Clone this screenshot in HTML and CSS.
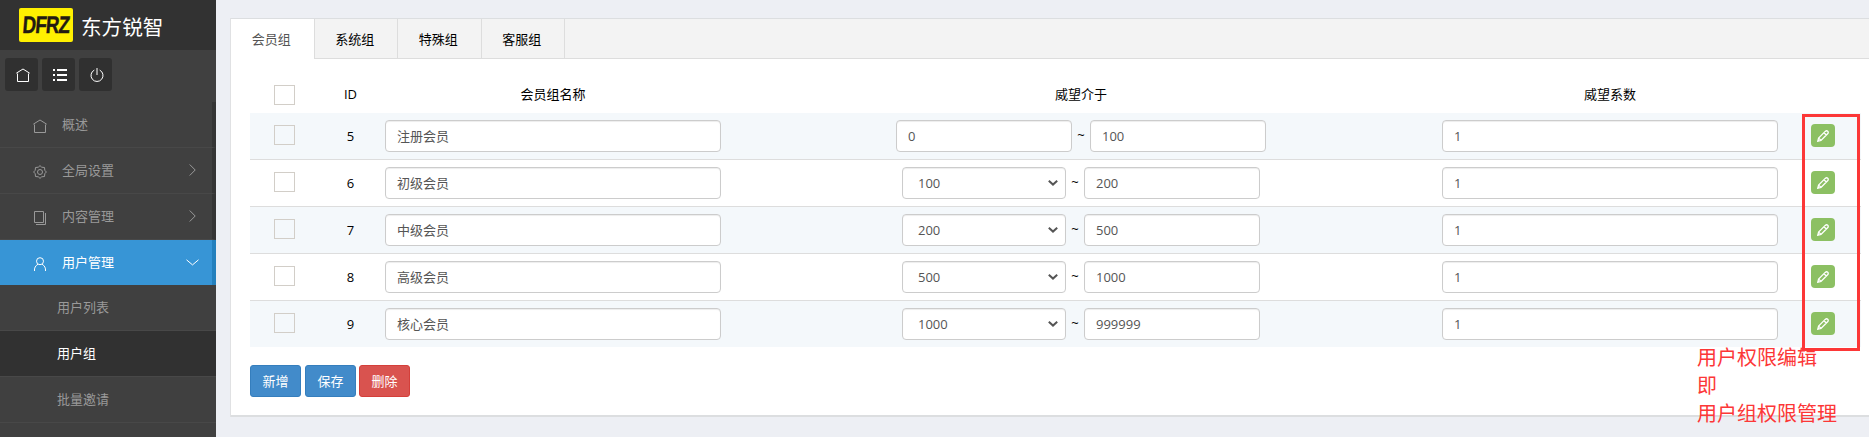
FILE: index.html
```html
<!DOCTYPE html>
<html lang="zh-CN">
<head>
<meta charset="utf-8">
<title>用户组</title>
<link rel="stylesheet" href="styles.css">
</head>
<body>
<svg class="defs" width="0" height="0">
  <symbol id="home" viewBox="0 0 14 14"><path d="M.3 5.200 7 1l6.700 4.200M1.500 5.500v8h11v-8" /></symbol>
  <symbol id="pencil" viewBox="0 0 12 12"><path d="M.8 11.200 1.600 8 8.200 1.400Q9.600.2 10.700 1.300T10.600 3.800L4 10.400ZM7 2.700 9.300 5M1.700 8.100 3.900 10.300"/></symbol>
  <symbol id="right" viewBox="0 0 7 12"><path d="M.7.5 6.200 6 .7 11.500"/></symbol>
</svg>
<div class="app">
  <aside class="sidebar">
    <header class="brand"><span class="logo"><b>DFRZ</b></span><span class="brand-name">东方锐智</span></header>
    <div class="tools">
      <a class="tool"><svg width="14" height="14"><use href="#home"/></svg></a>
      <a class="tool"><svg class="solid" width="14" height="12" viewBox="0 0 14 12"><path d="M0 0h2v2H0zM4 0h10v2H4zM0 5h2v2H0zM4 5h10v2H4zM0 10h2v2H0zM4 10h10v2H4z"/></svg></a>
      <a class="tool power"><svg width="14" height="14" viewBox="0 0 14 14"><path d="M4.300 2.100a6 6 0 1 0 5.400 0M7 0v7"/></svg></a>
    </div>
    <nav class="menu">
      <a class="item"><svg class="ico" width="14" height="14"><use href="#home"/></svg><span>概述</span></a>
      <a class="item"><svg class="ico" width="14" height="14" viewBox="0 0 14 14"><circle cx="7" cy="7" r="2.500"/><path d="M7 .6 8.700 2.200 11.500 2.500 11.800 5.300 13.400 7 11.800 8.700 11.500 11.500 8.700 11.800 7 13.400 5.300 11.800 2.500 11.500 2.200 8.700.6 7 2.200 5.300 2.500 2.500 5.300 2.200Z"/></svg><span>全局设置</span><svg class="arrow" width="7" height="12"><use href="#right"/></svg></a>
      <a class="item"><svg class="ico" width="14" height="14" viewBox="0 0 14 14"><path d="M1.500.5h9v11h-9zM12.500 2v11.500H3"/></svg><span>内容管理</span><svg class="arrow" width="7" height="12"><use href="#right"/></svg></a>
      <a class="item active"><svg class="ico" width="14" height="14" viewBox="0 0 14 14"><circle cx="7" cy="4.200" r="3.500"/><path d="M1.500 14Q1 9.500 5 7.200M12.500 14Q13 9.500 9 7.200"/></svg><span>用户管理</span><svg class="arrow down" width="13" height="7" viewBox="0 0 13 7"><path d="M.5.8 6.500 5.900 12.500.8"/></svg></a>
      <a class="sub">用户列表</a>
      <a class="sub current">用户组</a>
      <a class="sub">批量邀请</a>
    </nav>
  </aside>
  <main class="main">
    <section class="card">
      <ul class="tabs"><li class="tab on">会员组</li><li class="tab">系统组</li><li class="tab">特殊组</li><li class="tab">客服组</li></ul>
      <div class="body">
        <div class="row head"><i class="check"></i><span>ID</span><span>会员组名称</span><span>威望介于</span><span>威望系数</span></div>
        <div class="row odd"><i class="check"></i><span>5</span><div class="field">注册会员</div><div class="range"><div class="field">0</div><em>~</em><div class="field">100</div></div><div class="field">1</div><a class="edit"><svg width="12" height="12"><use href="#pencil"/></svg></a></div>
        <div class="row"><i class="check"></i><span>6</span><div class="field">初级会员</div><div class="range"><div class="field select">100<svg width="10" height="6" viewBox="0 0 10 6"><path d="M.8.8 5 4.600 9.200.8"/></svg></div><em>~</em><div class="field">200</div></div><div class="field">1</div><a class="edit"><svg width="12" height="12"><use href="#pencil"/></svg></a></div>
        <div class="row odd"><i class="check"></i><span>7</span><div class="field">中级会员</div><div class="range"><div class="field select">200<svg width="10" height="6" viewBox="0 0 10 6"><path d="M.8.8 5 4.600 9.200.8"/></svg></div><em>~</em><div class="field">500</div></div><div class="field">1</div><a class="edit"><svg width="12" height="12"><use href="#pencil"/></svg></a></div>
        <div class="row"><i class="check"></i><span>8</span><div class="field">高级会员</div><div class="range"><div class="field select">500<svg width="10" height="6" viewBox="0 0 10 6"><path d="M.8.8 5 4.600 9.200.8"/></svg></div><em>~</em><div class="field">1000</div></div><div class="field">1</div><a class="edit"><svg width="12" height="12"><use href="#pencil"/></svg></a></div>
        <div class="row odd last"><i class="check"></i><span>9</span><div class="field">核心会员</div><div class="range"><div class="field select">1000<svg width="10" height="6" viewBox="0 0 10 6"><path d="M.8.8 5 4.600 9.200.8"/></svg></div><em>~</em><div class="field">999999</div></div><div class="field">1</div><a class="edit"><svg width="12" height="12"><use href="#pencil"/></svg></a></div>
        <div class="actions"><a class="btn">新增</a><a class="btn">保存</a><a class="btn danger">删除</a></div>
      </div>
    </section>
  </main>
</div>
<div class="mark"></div>
<div class="note">用户权限编辑<br>即<br>用户组权限管理</div>
</body>
</html>
```
FILE: styles.css
```css
* { box-sizing: border-box; }
body { margin: 0; height: 437px; overflow: hidden; background: #edeff4; color: #000; font: 13px/20px "Open Sans", "Noto Sans CJK SC", sans-serif; }
svg { fill: none; stroke: currentColor; display: block; }
.defs { position: absolute; }
.app { display: flex; height: 437px; }

/* Sidebar */
.sidebar { width: 216px; flex: none; background: #404040; color: #999; }
.brand { height: 50px; background: #323232; display: flex; padding: 8px 0 0 19px; }
.logo { width: 54px; height: 34px; background: #fff000; border-radius: 2px; color: #231a12; display: flex; align-items: center; justify-content: center; }
.logo b { font: bold 24px/34px "Liberation Sans", sans-serif; letter-spacing: -1px; transform: scaleX(.78) skewX(-6deg); -webkit-text-stroke: .4px currentColor; }
.brand-name { margin-left: 8px; color: #fff; font-size: 20.600px; line-height: 38px; }
.tools { height: 52px; display: flex; gap: 4px; padding: 8px 5px; color: #fff; }
.tool { width: 33px; height: 33px; border-radius: 3px; background: #303030; display: flex; align-items: center; justify-content: center; padding-left: 3px; }
.power { padding-left: 2px; }
.solid { fill: currentColor; stroke: none; }
.item { height: 46px; display: flex; align-items: center; padding: 0 16px 1px 33px; border-bottom: 1px solid #484848; border-right: 4px solid #353535; }
.ico { margin: 4px 15px 0 0; }
.arrow { margin-left: auto; }
.down { margin-right: -3px; }
.active { background: #3795d6; color: #fff; height: 45px; border-bottom: 0; border-right-color: #2480bd; }
.sub { display: block; height: 46px; line-height: 45px; padding-left: 57px; border-bottom: 1px solid #484848; }
.current { background: #313131; color: #fff; }
.menu span { line-height: 20px; }

/* Content card */
.main { flex: 1; min-width: 0; padding: 18px 0 0 15px; }
.card { height: 399px; background: #fff; border-top: 1px solid #dcdee0; border-bottom: 2px solid #dcdee0; box-shadow: -1px 0 0 #e0e1e3; }
.tabs { display: flex; height: 40px; margin: 0; padding: 0; list-style: none; background: #f3f3f3; border-bottom: 1px solid #ddd; }
.tab { width: 83.500px; border-right: 1px solid #ddd; text-align: center; line-height: 41px; padding-right: 2px; }
.on { background: #fff; color: #555; height: 40px; }
.body { padding: 18px 0 0 19px; }
.row { display: grid; grid-template-columns: 69px 63px 342px 714px 344px 79px; width: 1611px; height: 47px; padding-top: 7px; border-bottom: 1px solid #ddd; justify-items: center; align-items: start; }
.row > span { line-height: 32px; }
.row.head { height: 36px; padding-top: 8px; border: 0; }
.head > span { line-height: 19px; }
.odd { background: #f4f8fb; }
.last { height: 46px; border-bottom: 0; }
.check { width: 21px; height: 20px; border: 1px solid #d2cec8; margin-top: 5px; }
.head .check { margin-top: 0; }
.field { width: 336px; height: 32px; border: 1px solid #ccc; border-radius: 4px; background: #fff; box-shadow: inset 0 1px 1px rgba(0,0,0,.075); color: #555; line-height: 30px; padding: 0 11px; }
.range { display: flex; }
.range .field { width: 176px; }
.range .select { width: 164px; display: flex; align-items: center; justify-content: space-between; padding: 0 7px 0 15px; }
.select svg { stroke-width: 2; }
.range em { width: 18px; text-align: center; font-style: normal; line-height: 30px; }
.edit { justify-self: start; margin: 4px 0 0 29px; width: 24px; height: 23px; border-radius: 4px; background: #8cc063; color: #fff; display: flex; align-items: center; justify-content: center; }
.edit svg { stroke-width: 1.300; }
.actions { display: flex; gap: 4px; margin-top: 18px; }
.btn { width: 51px; height: 32px; border: 1px solid #357ebd; border-radius: 3px; background: #428bca; color: #fff; text-align: center; line-height: 30px; }
.danger { margin-left: -1px; background: #d9534f; border-color: #d43f3a; }

/* Callout drawn over the page */
.mark { position: absolute; left: 1802px; top: 114px; width: 58px; height: 237px; border: 3px solid #fc3737; }
.note { position: absolute; left: 1697px; top: 344px; color: #fc3737; font-size: 20px; line-height: 28px; white-space: nowrap; }
```
